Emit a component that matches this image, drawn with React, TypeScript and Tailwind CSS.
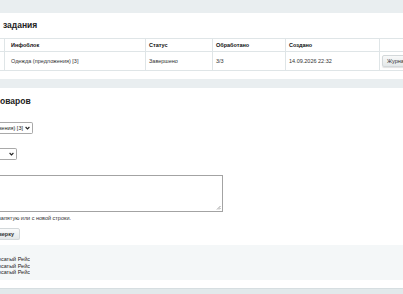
import React from 'react';

const rows = [
    { iblock: 'Одежда (предложения) [3]', status: 'Завершено', done: '3/3', created: '14.09.2026 22:32' },
];

const names = ['Полосатый Рейс', 'Полосатый Рейс', 'Полосатый Рейс'];

const Chevron: React.FC = () => (
    <svg width="5" height="4" viewBox="0 0 5 4" className="flex-none">
        <path d="M0.6 1 L2.5 3 L4.4 1" fill="none" stroke="#222" strokeWidth="1.1" />
    </svg>
);

const App: React.FC = () => {
    return (
        <div className="w-[403px] h-[294px] overflow-hidden bg-[#e9eef0] font-['Liberation_Sans',Arial,sans-serif] text-[#333]">
            <div className="h-[13px]" />

            {/* task table */}
            <section className="bg-white">
                <h2 className="h-[25px] pl-[3px] flex items-center text-[8.5px] font-bold text-[#222]">задания</h2>
                <div className="grid grid-cols-[4px_141px_67px_73px_94px_1fr] text-[5.5px]">
                    <div className="h-[14px] border-y border-[#dfe5e7]" />
                    <div className="h-[14px] border-y border-l border-[#dfe5e7] pl-[6px] flex items-center font-bold text-[#111]">Инфоблок</div>
                    <div className="h-[14px] border-y border-l border-[#dfe5e7] pl-[3px] flex items-center font-bold text-[#111]">Статус</div>
                    <div className="h-[14px] border-y border-l border-[#dfe5e7] pl-[3px] flex items-center font-bold text-[#111]">Обработано</div>
                    <div className="h-[14px] border-y border-l border-[#dfe5e7] pl-[3px] flex items-center font-bold text-[#111]">Создано</div>
                    <div className="h-[14px] border-y border-l border-[#dfe5e7]" />
                    {rows.map((r) => (
                        <React.Fragment key={r.created}>
                            <div className="h-[19px] border-b border-[#dfe5e7]" />
                            <div className="h-[19px] border-b border-l border-[#dfe5e7] pl-[6px] flex items-center">{r.iblock}</div>
                            <div className="h-[19px] border-b border-l border-[#dfe5e7] pl-[3px] flex items-center">{r.status}</div>
                            <div className="h-[19px] border-b border-l border-[#dfe5e7] pl-[3px] flex items-center">{r.done}</div>
                            <div className="h-[19px] border-b border-l border-[#dfe5e7] pl-[3px] flex items-center">{r.created}</div>
                            <div className="h-[19px] border-b border-l border-[#dfe5e7] pl-[2px] flex items-center">
                                <button className="h-[12px] px-[4px] rounded-[2px] border border-[#d3d8da] bg-gradient-to-b from-[#f8f9f9] to-[#e4e8e9] text-[5.5px] text-[#333] shadow-[0_1px_1px_rgba(0,0,0,0.12)]">
                                    Журнал
                                </button>
                            </div>
                        </React.Fragment>
                    ))}
                </div>
                <div className="h-[8px]" />
            </section>

            <div className="h-[9px]" />

            {/* export form */}
            <section className="bg-white">
                <h2 className="h-[26px] flex items-center text-[8.5px] font-bold text-[#222]">оваров</h2>

                <div className="pt-[8px] flex flex-col gap-[14px]">
                    <div className="w-[33px] h-[12px] overflow-hidden flex items-center justify-end gap-[2px] pr-[2px] border border-l-0 border-[#a9a9a9] rounded-r-[2px] text-[5.5px] text-[#222]">
                        <span className="flex-none whitespace-nowrap">Одежда (предложения) [3]</span>
                        <Chevron />
                    </div>
                    <div className="w-[17px] h-[12px] flex items-center justify-end pr-[2px] border border-l-0 border-[#a9a9a9] rounded-r-[2px]">
                        <Chevron />
                    </div>
                </div>

                <div className="pt-[15px]">
                    <div className="relative w-[223px] h-[37px] border border-l-0 border-[#a3a3a3]">
                        <svg width="5" height="5" viewBox="0 0 5 5" className="absolute right-[1px] bottom-[1px]">
                            <path d="M4.5 1 L1 4.5 M4.5 3 L3 4.5" stroke="#888" strokeWidth="0.8" />
                        </svg>
                    </div>
                </div>

                <div className="mt-[2px] w-[71px] h-[8px] overflow-hidden flex items-center justify-end text-[5.5px] text-[#333]">
                    <span className="flex-none whitespace-nowrap">Укажите значения через запятую или с новой строки.</span>
                </div>

                <div className="mt-[6px] w-[20px] overflow-hidden flex justify-end">
                    <button className="flex-none h-[12px] pl-[6px] pr-[5px] rounded-[2px] border border-[#d3d8da] bg-gradient-to-b from-[#fafbfb] to-[#e3e7e8] text-[5.5px] font-bold text-[#333] shadow-[0_1px_1px_rgba(0,0,0,0.12)] whitespace-nowrap">
                        Запустить проверку
                    </button>
                </div>

                <div className="mt-[5px] h-[35px] bg-[#f4f7f8] pt-[11px]">
                    {names.map((n, i) => (
                        <div key={i} className="w-[30px] h-[6.5px] overflow-hidden flex items-center justify-end text-[5.5px] text-[#222]">
                            <span className="flex-none whitespace-nowrap">{n}</span>
                        </div>
                    ))}
                </div>
                <div className="h-[8px]" />
            </section>

            <div className="h-[8px] border-t border-[#d6dee1] bg-[#e2e9eb]" />
        </div>
    );
};

export default App;
